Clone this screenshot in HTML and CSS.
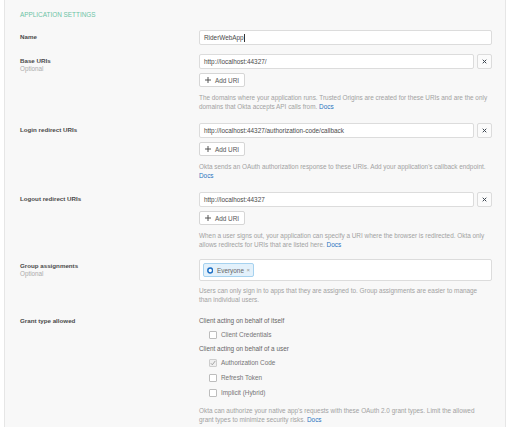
FILE: index.html
```html
<!DOCTYPE html>
<html>
<head>
<meta charset="utf-8">
<link rel="stylesheet" href="styles.css">
</head>
<body>
<div class="panel">
  <h2 class="heading">Application Settings</h2>

  <div class="row row-name">
    <div class="label"><div class="label-title">Name</div></div>
    <div class="field">
      <div class="input">RiderWebApp<span class="caret"></span></div>
    </div>
  </div>

  <div class="row row-base">
    <div class="label"><div class="label-title">Base URIs</div><div class="label-sub">Optional</div></div>
    <div class="field">
      <div class="uri-line">
        <div class="input">http://localhost:44327/</div>
        <div class="remove"><svg width="5" height="5" viewBox="0 0 5 5"><path d="M0.7 0.7L4.3 4.3M4.3 0.7L0.7 4.3" stroke="#3d4550" stroke-width="1"/></svg></div>
      </div>
      <div class="add-btn"><svg width="6" height="6" viewBox="0 0 6 6"><path d="M3 0V6M0 3H6" stroke="#444" stroke-width="0.9"/></svg><span>Add URI</span></div>
      <p class="help">The domains where your application runs. Trusted Origins are created for these URIs and are the only<br>domains that Okta accepts API calls from. <a class="docs">Docs</a></p>
    </div>
  </div>

  <div class="row row-login">
    <div class="label"><div class="label-title">Login redirect URIs</div></div>
    <div class="field">
      <div class="uri-line">
        <div class="input">http://localhost:44327/authorization-code/callback</div>
        <div class="remove"><svg width="5" height="5" viewBox="0 0 5 5"><path d="M0.7 0.7L4.3 4.3M4.3 0.7L0.7 4.3" stroke="#3d4550" stroke-width="1"/></svg></div>
      </div>
      <div class="add-btn"><svg width="6" height="6" viewBox="0 0 6 6"><path d="M3 0V6M0 3H6" stroke="#444" stroke-width="0.9"/></svg><span>Add URI</span></div>
      <p class="help">Okta sends an OAuth authorization response to these URIs. Add your application's callback endpoint.<br><a class="docs">Docs</a></p>
    </div>
  </div>

  <div class="row row-logout">
    <div class="label"><div class="label-title">Logout redirect URIs</div></div>
    <div class="field">
      <div class="uri-line">
        <div class="input">http://localhost:44327</div>
        <div class="remove"><svg width="5" height="5" viewBox="0 0 5 5"><path d="M0.7 0.7L4.3 4.3M4.3 0.7L0.7 4.3" stroke="#3d4550" stroke-width="1"/></svg></div>
      </div>
      <div class="add-btn"><svg width="6" height="6" viewBox="0 0 6 6"><path d="M3 0V6M0 3H6" stroke="#444" stroke-width="0.9"/></svg><span>Add URI</span></div>
      <p class="help">When a user signs out, your application can specify a URI where the browser is redirected. Okta only<br>allows redirects for URIs that are listed here. <a class="docs">Docs</a></p>
    </div>
  </div>

  <div class="row row-group">
    <div class="label"><div class="label-title">Group assignments</div><div class="label-sub">Optional</div></div>
    <div class="field">
      <div class="chip-box">
        <div class="chip">
          <svg width="7" height="7" viewBox="0 0 7 7"><circle cx="3.5" cy="3.5" r="2.6" fill="#fff" stroke="#1d6fc4" stroke-width="1.6"/></svg>
          <span class="chip-text">Everyone</span>
          <span class="chip-x">×</span>
        </div>
      </div>
      <p class="help help-group">Users can only sign in to apps that they are assigned to. Group assignments are easier to manage<br>than individual users.</p>
    </div>
  </div>

  <div class="row row-grant">
    <div class="label"><div class="label-title">Grant type allowed</div></div>
    <div class="field">
      <div class="sub">Client acting on behalf of itself</div>
      <div class="check"><span class="box"></span><span>Client Credentials</span></div>
      <div class="sub">Client acting on behalf of a user</div>
      <div class="check"><span class="box box-on"><svg width="6" height="6" viewBox="0 0 6 6"><path d="M0.8 3.2L2.3 4.8L5.3 0.9" fill="none" stroke="#9a9a9a" stroke-width="0.9"/></svg></span><span>Authorization Code</span></div>
      <div class="check"><span class="box"></span><span>Refresh Token</span></div>
      <div class="check"><span class="box"></span><span>Implicit (Hybrid)</span></div>
      <p class="help help-grant">Okta can authorize your native app's requests with these OAuth 2.0 grant types. Limit the allowed<br>grant types to minimize security risks. <a class="docs">Docs</a></p>
    </div>
  </div>
</div>
</body>
</html>
```

FILE: styles.css
```css
html, body {
  margin: 0;
  padding: 0;
  background: #ffffff;
}

body {
  font-family: "Liberation Sans", Arial, sans-serif;
  height: 427px;
  overflow: hidden;
}

.panel {
  margin-left: 4px;
  width: 472px;
  height: 427px;
  padding: 0 13px 0 15px;
  background: #f8f8f8;
  border-left: 1px solid #e6e6e6;
  border-right: 1px solid #e6e6e6;
}

.heading {
  margin: 0;
  padding-top: 10px;
  font-size: 6.4px;
  line-height: 10px;
  font-weight: normal;
  text-transform: uppercase;
  color: #6cc3a5;
}

.row {
  display: grid;
  grid-template-columns: 179px 293px;
}

.row-name { margin-top: 10px; }
.row-base { margin-top: 9px; }
.row-login { margin-top: 12px; }
.row-logout { margin-top: 12px; }
.row-group { margin-top: 10px; }
.row-grant { margin-top: 10.5px; }

.label {
  padding-top: 3px;
}

.label-title {
  font-size: 6.2px;
  line-height: 8px;
  font-weight: bold;
  color: #4a4a4a;
}

.label-sub {
  font-size: 6.3px;
  line-height: 8px;
  color: #ababab;
}

.input {
  box-sizing: border-box;
  height: 15px;
  padding: 0 4px;
  background: #ffffff;
  border: 1px solid #dcdcdc;
  border-radius: 2px;
  font-size: 6.4px;
  line-height: 13px;
  color: #4a4a4a;
  display: flex;
  align-items: center;
}

.caret {
  display: inline-block;
  width: 0.6px;
  height: 8px;
  background: #333;
  margin-left: 0.5px;
}

.uri-line {
  display: flex;
  gap: 3px;
}

.uri-line .input {
  flex: 1;
}

.remove {
  box-sizing: border-box;
  width: 15px;
  height: 15px;
  background: #fbfbfb;
  border: 1px solid #dcdcdc;
  border-radius: 2px;
  display: flex;
  align-items: center;
  justify-content: center;
}

.add-btn {
  box-sizing: border-box;
  margin-top: 4px;
  width: 46px;
  height: 14px;
  background: #ffffff;
  border: 1px solid #d6d6d6;
  border-radius: 2px;
  display: flex;
  align-items: center;
  justify-content: center;
  gap: 4px;
  font-size: 6.4px;
  color: #555;
}

.help {
  margin: 6px 0 0 0;
  font-size: 6.4px;
  line-height: 9px;
  color: #a2a2a2;
  white-space: nowrap;
}

.help-group {
  margin-top: 4.5px;
}

.help-grant {
  margin-top: 6px;
}

.docs {
  color: #2a73c0;
}

.chip-box {
  box-sizing: border-box;
  height: 22px;
  padding: 3px;
  background: #ffffff;
  border: 1px solid #dcdcdc;
  border-radius: 2px;
  display: flex;
}

.chip {
  box-sizing: border-box;
  height: 14px;
  width: 51px;
  padding: 0 3px;
  background: #e3f1fb;
  border: 1px solid #a6d2ef;
  border-radius: 2px;
  display: flex;
  align-items: center;
  gap: 3.5px;
  font-size: 6.4px;
  color: #666;
}

.chip-x {
  font-size: 6px;
  color: #999;
  margin-left: -1px;
}

.sub {
  height: 13px;
  line-height: 13px;
  font-size: 6.4px;
  color: #666;
}

.check {
  height: 15px;
  display: flex;
  align-items: center;
  gap: 4px;
  padding-left: 10px;
  font-size: 6.4px;
  color: #757575;
}

.box {
  box-sizing: border-box;
  width: 8px;
  height: 8px;
  background: #ffffff;
  border: 1px solid #bdbdbd;
  border-radius: 1px;
  display: flex;
  align-items: center;
  justify-content: center;
}

.box-on {
  background: #efefef;
  border-color: #cdcdcd;
}
```
